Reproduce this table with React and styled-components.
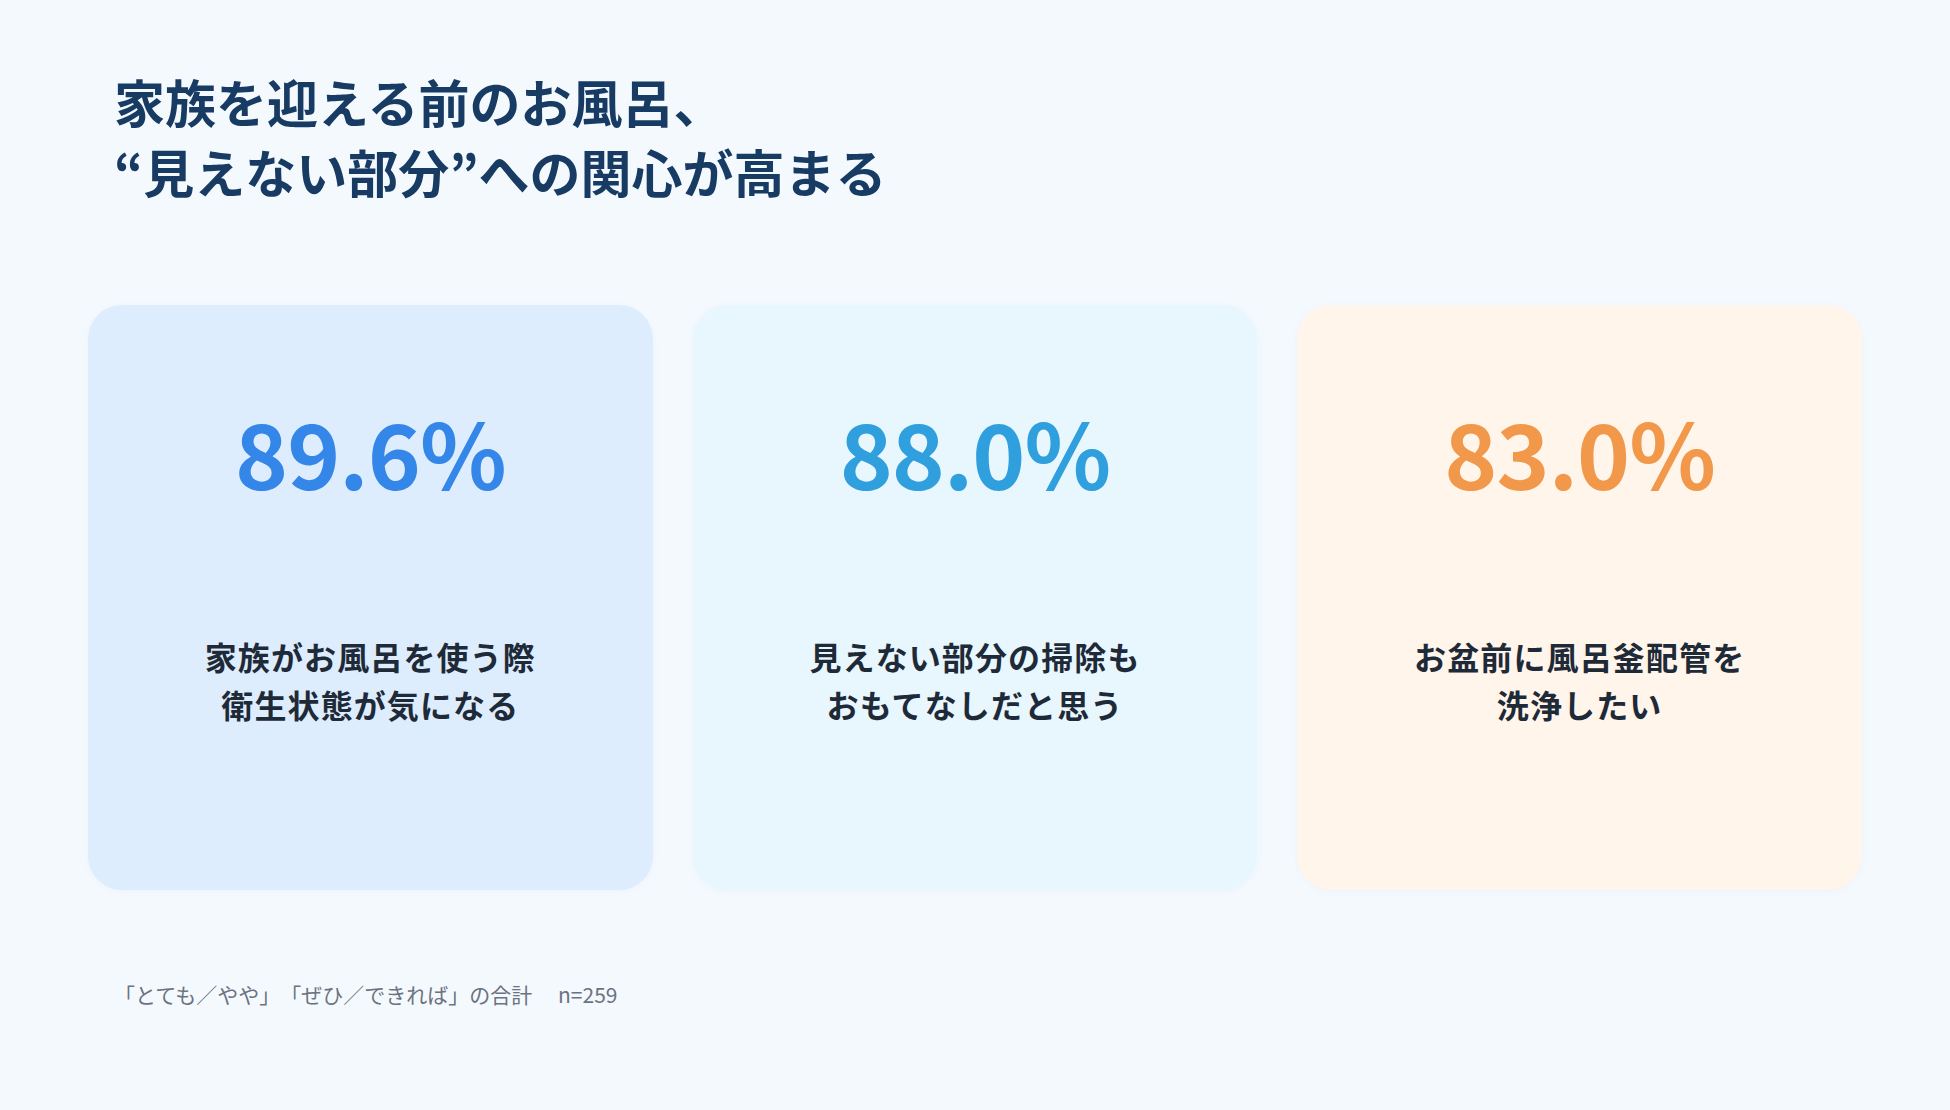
import styled, { createGlobalStyle } from "styled-components";

const GlobalStyle = createGlobalStyle`
  html, body {
    margin: 0;
    padding: 0;
    background: #f4f9fe;
  }
  body {
    font-family: "Noto Sans CJK JP", "Noto Sans", sans-serif;
    text-spacing-trim: space-all;
  }
`

const Page = styled.div`
  width: 1950px;
  height: 1110px;
  box-sizing: border-box;
  padding: 66px 88px 0;
  display: flex;
  flex-direction: column;
  background: #f4f9fe;
`

const Title = styled.h1`
  margin: 0;
  padding-left: 26px;
  font-size: 51px;
  line-height: 70px;
  font-weight: 700;
  color: #173b62;
`

const CardRow = styled.div`
  margin-top: 99px;
  display: grid;
  grid-template-columns: repeat(3, 1fr);
  gap: 40px;
`

const Card = styled.div`
  height: 585px;
  box-sizing: border-box;
  padding-top: 90px;
  border-radius: 34px;
  background: ${ ({ bg }) => bg };
  box-shadow: 0 1px 6px rgba(120, 150, 190, 0.06);
  display: flex;
  flex-direction: column;
  align-items: center;
`

const Percent = styled.div`
  font-size: 90px;
  line-height: 112px;
  font-weight: 700;
  letter-spacing: -0.01em;
  color: ${ ({ color }) => color };
`

const Label = styled.div`
  margin-top: 125px;
  font-size: 32px;
  line-height: 48px;
  font-weight: 700;
  color: #1f2a38;
  text-align: center;
  letter-spacing: 0.035em;
`

const Note = styled.div`
  margin-top: 89px;
  padding-left: 26px;
  font-size: 21px;
  line-height: 30px;
  color: #6b7280;
  white-space: pre;
`

const STATS = [
  { value: '89.6%', color: '#3486e9', bg: '#ddedfd', lines: ['家族がお風呂を使う際', '衛生状態が気になる'] },
  { value: '88.0%', color: '#2f9fdd', bg: '#e8f6fd', lines: ['見えない部分の掃除も', 'おもてなしだと思う'] },
  { value: '83.0%', color: '#f2984b', bg: '#fff5eb', lines: ['お盆前に風呂釜配管を', '洗浄したい'] },
]

const App = () => (
  <>
    <GlobalStyle/>
    <Page>
      <Title>
        家族を迎える前のお風呂、<br/>
        “見えない部分”への関心が高まる
      </Title>
      <CardRow>
        {
          STATS.map(stat => <Card key={ stat.value } bg={ stat.bg }>
            <Percent color={ stat.color }>{ stat.value }</Percent>
            <Label>
              { stat.lines[0] }<br/>{ stat.lines[1] }
            </Label>
          </Card>)
        }
      </CardRow>
      <Note>{ '「とても／やや」「ぜひ／できれば」の合計　 n=259' }</Note>
    </Page>
  </>
);

export default App;
